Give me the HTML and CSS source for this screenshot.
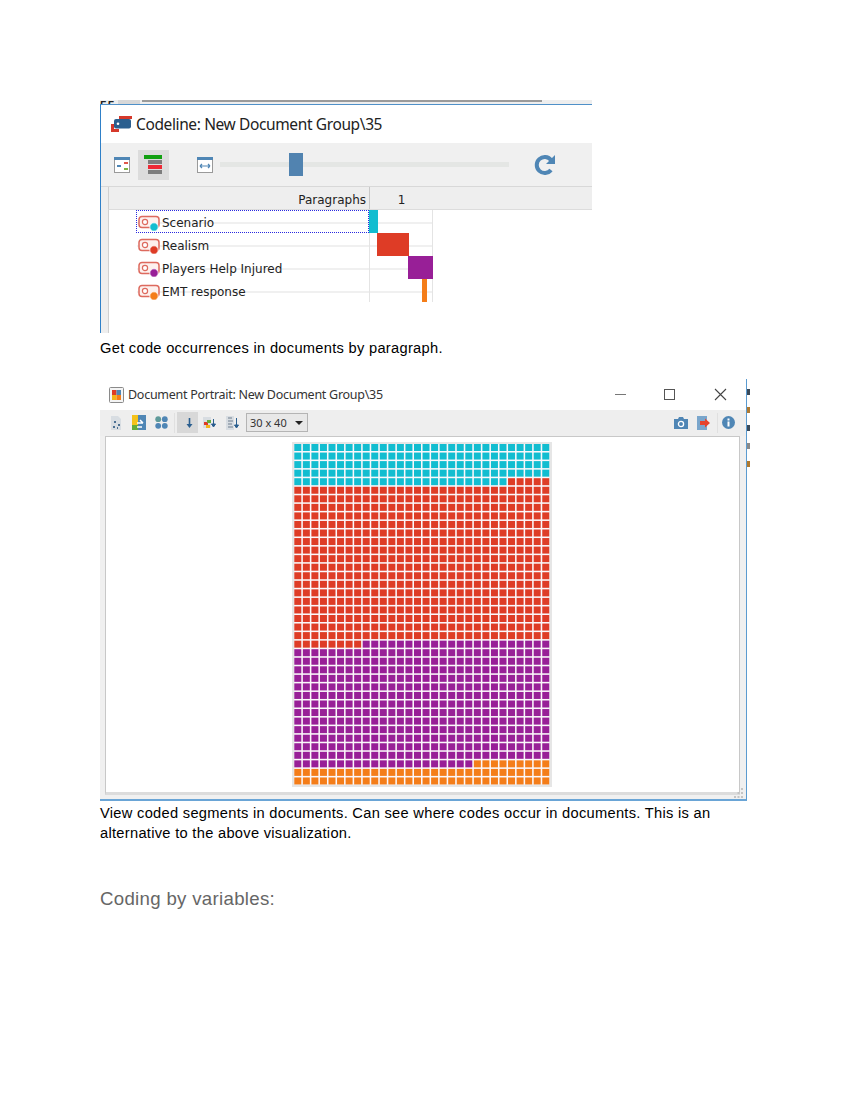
FILE: index.html
```html
<!DOCTYPE html>
<html>
<head>
    <title>Coding visualizations</title>
    <link rel="stylesheet" href="styles.css">
</head>
<body>
    <div class="codeline">
        <div class="behind"><span class="behind-num">55</span><span class="behind-block"></span><span class="behind-bar"></span></div>
        <div class="codeline-window">
            <div class="cl-title">
                <svg class="cl-logo" width="23" height="19" viewBox="0 0 23 19">
                    <path d="M9 1h13v3H9z M1 9h3v5h5v3H1z" fill="#d6392b"/>
                    <rect x="4" y="4" width="17" height="9.500" rx="2" fill="#2b5f8f"/>
                    <circle cx="8" cy="8.800" r="1.300" fill="#fff"/>
                </svg>
                <span>Codeline: New Document Group\35</span>
            </div>
            <div class="cl-toolbar">
                <svg class="cl-icon-a" width="16" height="16" viewBox="0 0 16 16">
                    <rect x="0.5" y="0.5" width="15" height="15" fill="#fff" stroke="#9a9a9a"/>
                    <rect x="0" y="0" width="16" height="3" fill="#4f86b5"/>
                    <rect x="3" y="8" width="4" height="2" fill="#4f86b5"/>
                    <rect x="10" y="5" width="4" height="2" fill="#e0584a"/>
                    <rect x="10" y="11" width="4" height="2" fill="#7cb342"/>
                </svg>
                <div class="cl-selected">
                    <span class="stack stack-green"></span>
                    <span class="stack stack-gray"></span>
                    <span class="stack stack-red"></span>
                    <span class="stack stack-gray"></span>
                </div>
                <svg class="cl-icon-b" width="16" height="16" viewBox="0 0 16 16">
                    <rect x="0.5" y="0.5" width="15" height="15" fill="#fff" stroke="#9a9a9a"/>
                    <rect x="0" y="0" width="16" height="3" fill="#4f86b5"/>
                    <path d="M3 9h10M3 9l2-2M3 9l2 2M13 9l-2-2M13 9l-2 2" fill="none" stroke="#4f86b5" stroke-width="1.2"/>
                </svg>
                <div class="slider"><span class="slider-thumb"></span></div>
                <svg class="refresh" width="24" height="22" viewBox="0 0 24 22">
                    <path d="M18 16a8 8 0 1 1 0-10" fill="none" stroke="#4f86b5" stroke-width="4"/>
                    <path d="M22 1v9h-9z" fill="#4f86b5"/>
                </svg>
            </div>
            <div class="cl-head">
                <div class="cl-head-name">Paragraphs</div>
                <div class="cl-head-col">1</div>
            </div>
            <div class="cl-rows">
                <div class="cl-row">
                    <div class="cl-name cl-name-sel">
                        <svg class="code-icon" width="24" height="18" viewBox="0 0 24 18"><use href="#codeTag"/><circle cx="16" cy="14" r="4.200" fill="#12bdd0" stroke="#fff" stroke-width="0.8"/></svg>
                        <span class="cl-label">Scenario</span>
                    </div>
                    <div class="cl-track"><span class="bar bar-scenario"></span></div>
                </div>
                <div class="cl-row">
                    <div class="cl-name">
                        <svg class="code-icon" width="24" height="18" viewBox="0 0 24 18"><use href="#codeTag"/><circle cx="16" cy="14" r="4.200" fill="#de3c26" stroke="#fff" stroke-width="0.8"/></svg>
                        <span class="cl-label">Realism</span>
                    </div>
                    <div class="cl-track"><span class="bar bar-realism"></span></div>
                </div>
                <div class="cl-row">
                    <div class="cl-name">
                        <svg class="code-icon" width="24" height="18" viewBox="0 0 24 18"><use href="#codeTag"/><circle cx="16" cy="14" r="4.200" fill="#981f97" stroke="#fff" stroke-width="0.8"/></svg>
                        <span class="cl-label">Players Help Injured</span>
                    </div>
                    <div class="cl-track"><span class="bar bar-players"></span></div>
                </div>
                <div class="cl-row">
                    <div class="cl-name">
                        <svg class="code-icon" width="24" height="18" viewBox="0 0 24 18"><use href="#codeTag"/><circle cx="16" cy="14" r="4.200" fill="#f47d19" stroke="#fff" stroke-width="0.8"/></svg>
                        <span class="cl-label">EMT response</span>
                    </div>
                    <div class="cl-track"><span class="bar bar-emt"></span></div>
                </div>
            </div>
        </div>
    </div>
    <p class="caption caption-first">Get code occurrences in documents by paragraph.</p>

    <div class="portrait">
        <div class="pt-main">
            <div class="pt-title">
                <svg class="pt-logo" width="15" height="16" viewBox="0 0 15 16">
                    <rect x="0.5" y="0.5" width="14" height="15" rx="1" fill="#f4f4f4" stroke="#8a8a8a"/>
                    <rect x="3" y="3" width="4.500" height="5" fill="#de3c26"/>
                    <rect x="7.500" y="3" width="4.500" height="5" fill="#4f86b5"/>
                    <rect x="3" y="8" width="4.500" height="5" fill="#f4b41a"/>
                    <rect x="7.500" y="8" width="4.500" height="5" fill="#f47d19"/>
                </svg>
                <span class="pt-text">Document Portrait: New Document Group\35</span>
                <div class="win-buttons">
                    <span class="win-min"></span>
                    <span class="win-max"></span>
                    <svg width="13" height="13" viewBox="0 0 13 13"><path d="M1 1l11 11M12 1L1 12" stroke="#444" stroke-width="1.100"/></svg>
                </div>
            </div>
            <div class="pt-toolbar">
                <svg class="tool-cells" width="14" height="16" viewBox="0 0 14 16">
                    <path d="M2 1h7l3 3v11H2z" fill="#d8dde2"/>
                    <path d="M5 6h2v2H5zM9 9h2v2H9zM4 11h2v2H4zM8 12h1v2H8z" fill="#4a6f92"/>
                </svg>
                <svg class="tool-swap" width="14" height="15" viewBox="0 0 14 15">
                    <rect width="14" height="15" fill="#f4c21a"/>
                    <rect x="6" y="0" width="8" height="15" fill="#4f86b5"/>
                    <rect x="0" y="10" width="6" height="5" fill="#64ac3a"/>
                    <path d="M5 8h6M8 5l3 3M5 12h5" stroke="#fff" stroke-width="1.500" fill="none"/>
                </svg>
                <svg class="tool-dots" width="13" height="13" viewBox="0 0 13 13">
                    <circle cx="3.200" cy="3.200" r="2.900" fill="#5f9a9a"/>
                    <circle cx="9.800" cy="3.200" r="2.900" fill="#4f86b5"/>
                    <circle cx="3.200" cy="9.800" r="2.900" fill="#4f86b5"/>
                    <circle cx="9.800" cy="9.800" r="2.900" fill="#4f86b5"/>
                </svg>
                <span class="tool-sep tool-sep-left"></span>
                <div class="tool-on">
                    <svg width="7" height="10" viewBox="0 0 7 10"><path d="M3.500 0v7" stroke="#2b5f8f" stroke-width="1.600"/><path d="M0.500 6h6L3.500 10z" fill="#2b5f8f"/></svg>
                </div>
                <svg class="tool-sort" width="13" height="13" viewBox="0 0 13 13">
                    <rect x="0" y="1" width="8" height="11" fill="#d8dde2"/>
                    <rect x="1" y="6" width="4" height="3" fill="#de3c26"/>
                    <rect x="4" y="4" width="4" height="3" fill="#64ac3a"/>
                    <rect x="3" y="9" width="4" height="3" fill="#f4b41a"/>
                    <path d="M10.500 3v6M8.500 8h4l-2 3z" fill="#2b5f8f" stroke="#2b5f8f"/>
                </svg>
                <svg class="tool-num" width="13" height="14" viewBox="0 0 13 14">
                    <rect x="0" y="0" width="8" height="14" fill="#d8dde2"/>
                    <path d="M2 2h4M2 5h5M2 8h4M2 11h5" stroke="#6f7f8d" stroke-width="1.200"/>
                    <path d="M10.500 2v8M8.500 9h4l-2 3z" fill="#2b5f8f" stroke="#2b5f8f"/>
                </svg>
                <div class="size-select"><span>30 x 40</span><span class="size-arrow"></span></div>
                <div class="pt-tools-right">
                    <svg class="tool-camera" width="14" height="12" viewBox="0 0 14 12">
                        <path d="M0 2h4l1-2h4l1 2h4v10H0z" fill="#4f86b5"/>
                        <circle cx="7" cy="7" r="2.600" fill="none" stroke="#fff" stroke-width="1.300"/>
                    </svg>
                    <svg class="tool-export" width="13" height="14" viewBox="0 0 13 14">
                        <rect width="10" height="14" fill="#7aa6cc"/>
                        <path d="M3 5h5V2.500L13 7l-5 4.500V9H3z" fill="#e5432d"/>
                    </svg>
                    <span class="tool-sep tool-sep-right"></span>
                    <svg width="13" height="13" viewBox="0 0 13 13">
                        <circle cx="6.500" cy="6.500" r="6.500" fill="#4f86b5"/>
                        <rect x="5.500" y="5.500" width="2" height="5" fill="#fff"/>
                        <rect x="5.500" y="2.500" width="2" height="2" fill="#fff"/>
                    </svg>
                </div>
            </div>
            <div class="pt-canvas">
                <svg id="sheet" class="pt-sheet" width="260" height="345" viewBox="0 0 260 345"></svg>
            </div>
            <svg class="pt-grip" width="9" height="10" viewBox="0 0 9 10">
                <path d="M7 0h2v2H7zM7 4h2v2H7zM7 8h2v2H7zM3.500 4h2v2h-2zM3.500 8h2v2h-2zM0 8h2v2H0z" fill="#c4c4c4"/>
            </svg>
        </div>
        <div class="pt-edge">
            <span class="edge-mark edge-dark"></span>
            <span class="edge-mark edge-brown"></span>
            <span class="edge-mark edge-dark"></span>
            <span class="edge-mark edge-gray"></span>
            <span class="edge-mark edge-brown"></span>
        </div>
    </div>
    <p class="caption caption-second">View coded segments in documents. Can see where codes occur in documents. This is an<br>alternative to the above visualization.</p>

    <h3 class="section-title">Coding by variables:</h3>

    <svg class="defs" width="0" height="0">
        <symbol id="codeTag" viewBox="0 0 24 18">
            <rect x="1" y="3.500" width="20" height="11" rx="3" fill="#fdf1ee" stroke="#dd6a5e" stroke-width="1.500"/>
            <circle cx="7" cy="9" r="2.600" fill="#fff" stroke="#dd6a5e" stroke-width="1.200"/>
        </symbol>
    </svg>

    <script src="script.js"></script>
</body>
</html>
```

FILE: styles.css
```css
body {
    margin: 0;
    padding: 100px 0 0 100px;
    font-family: 'Liberation Sans', Arial, sans-serif;
    color: #000;
    background-color: #fff;
}

.defs {
    position: absolute;
}

/* first screenshot */
.codeline {
    width: 492px;
    height: 233px;
    overflow: hidden;
}

.behind {
    display: flex;
    height: 4px;
    overflow: hidden;
    background-color: #eee;
}

.behind-num {
    width: 18px;
    font-size: 12px;
    font-weight: bold;
    line-height: 12px;
    color: #222;
    letter-spacing: 1px;
}

.behind-block {
    width: 22px;
    background-color: #d8d8d8;
}

.behind-bar {
    margin-left: 2px;
    width: 400px;
    height: 2px;
    background-color: #9a9a9a;
}

.codeline-window {
    height: 229px;
    border-top: 1px solid #4f90c8;
    border-left: 1px solid #2f80c8;
    box-sizing: border-box;
    background-color: #eee;
}

.cl-title {
    display: flex;
    align-items: center;
    height: 38px;
    padding-left: 9px;
    gap: 3px;
    background-color: #fff;
    font-family: 'Noto Sans', sans-serif;
    font-size: 15.5px;
    letter-spacing: -0.38px;
    color: #222;
}

.cl-toolbar {
    display: flex;
    align-items: center;
    height: 43px;
    padding-left: 13px;
    background-color: #f0f0f0;
    border-bottom: 1px solid #d8d8d8;
}

.cl-selected {
    display: flex;
    flex-direction: column;
    align-items: flex-end;
    gap: 1.3px;
    box-sizing: border-box;
    width: 31px;
    height: 30px;
    margin-left: 8px;
    padding: 5px 7px 0 0;
    background-color: #dcdcdc;
}

.stack {
    display: block;
    width: 14px;
    height: 4px;
}

.stack-green {
    width: 18px;
    background-color: #12a012;
}

.stack-gray {
    background-color: #7d7d7d;
}

.stack-red {
    background-color: #ee2a35;
}

.cl-icon-b {
    margin-left: 28px;
}

.slider {
    position: relative;
    width: 289px;
    height: 5px;
    margin-left: 7px;
    background-color: #e4e6e4;
}

.slider-thumb {
    position: absolute;
    left: 69px;
    top: -9px;
    width: 14px;
    height: 23px;
    background-color: #5183b0;
}

.refresh {
    margin-left: 24px;
}

.cl-head {
    display: flex;
    height: 22px;
    margin-left: 7px;
    border-left: 1px solid #d0d0d0;
    border-bottom: 1px solid #dcdcdc;
    background-color: #eee;
    font-family: 'DejaVu Sans', sans-serif;
    font-size: 12px;
    line-height: 26px;
    color: #222;
}

.cl-head-name {
    width: 261px;
    box-sizing: border-box;
    padding-right: 3px;
    text-align: right;
    border-right: 1px solid #c8c8c8;
}

.cl-head-col {
    width: 63px;
    text-align: center;
}

.cl-rows {
    height: 123px;
    margin-left: 7px;
    border-left: 1px solid #d0d0d0;
    background-color: #fff;
}

.cl-row {
    display: flex;
    height: 23px;
    background: linear-gradient(#f0f0f0, #f0f0f0) no-repeat 28px 12px / 296px 2px;
}

.cl-name {
    display: flex;
    align-items: center;
    box-sizing: border-box;
    width: 261px;
    padding-left: 29px;
    border-right: 1px solid #e4e4e4;
    font-family: 'DejaVu Sans', sans-serif;
    font-size: 12px;
    color: #222;
}

.cl-label {
    margin-top: 2px;
}

.cl-name-sel {
    position: relative;
}

.cl-name-sel::before {
    content: "";
    position: absolute;
    left: 27px;
    right: 0;
    top: 0;
    bottom: 0;
    border: 1px dotted #2a2ae0;
}

.cl-track {
    width: 64px;
    margin-left: -1px;
    border-right: 1px solid #e4e4e4;
    box-sizing: border-box;
}

.bar {
    position: relative;
    display: block;
    height: 23px;
}

.bar-scenario {
    width: 9px;
    background-color: #12bdd0;
}

.bar-realism {
    width: 32px;
    margin-left: 8px;
    background-color: #de3c26;
}

.bar-players {
    width: 25px;
    margin-left: 39px;
    background-color: #981f97;
}

.bar-emt {
    width: 5px;
    margin-left: 53px;
    background-color: #f47d19;
}

/* captions */
.caption {
    margin: 0;
    font-size: 14.67px;
    line-height: 20px;
    letter-spacing: 0.29px;
}

.caption-first {
    margin-top: 5px;
}

.caption-second {
    margin-top: 2px;
    width: 640px;
}

.section-title {
    margin: 46px 0 0;
    font-size: 18.67px;
    font-weight: normal;
    line-height: 20px;
    letter-spacing: 0.3px;
    color: #666;
}

/* second screenshot */
.portrait {
    display: flex;
    width: 650px;
    height: 422px;
    margin-top: 21px;
}

.pt-main {
    position: relative;
    width: 647px;
    box-sizing: border-box;
    border-right: 1px solid #5b9bd0;
    border-bottom: 2px solid #6aa5d6;
    background-color: #f0f0f0;
}

.pt-edge {
    display: flex;
    flex-direction: column;
    width: 3px;
    padding-top: 10px;
    gap: 12px;
}

.edge-mark {
    display: block;
    height: 6px;
}

.edge-dark {
    background-color: #3a4a5a;
}

.edge-brown {
    background-color: #b07a30;
}

.edge-gray {
    background-color: #8a8a8a;
}

.pt-title {
    display: flex;
    align-items: center;
    height: 31px;
    padding-left: 9px;
    background-color: #fff;
    font-family: 'Noto Sans', sans-serif;
    font-size: 12.5px;
    letter-spacing: -0.27px;
    color: #333;
}

.pt-text {
    margin-left: 4px;
}

.win-buttons {
    display: flex;
    align-items: center;
    margin-left: auto;
    margin-right: 19px;
    gap: 39px;
}

.win-min {
    width: 11px;
    height: 1px;
    margin-right: -1px;
    background-color: #777;
}

.win-max {
    width: 9px;
    height: 9px;
    border: 1px solid #555;
}

.pt-toolbar {
    display: flex;
    align-items: center;
    height: 25px;
    padding: 0 0 1px 9px;
    gap: 7px;
    background-color: #eee;
}

.tool-swap,
.tool-dots {
    margin-left: 2px;
}

.tool-sep {
    width: 1px;
    height: 20px;
    background-color: #e0e0e0;
}

.tool-sep-left {
    margin-left: -1px;
}

.tool-sep-right {
    margin-right: 4px;
}

.tool-on {
    display: flex;
    align-items: center;
    justify-content: flex-end;
    box-sizing: border-box;
    width: 21px;
    height: 21px;
    margin-left: -5px;
    padding-right: 5px;
    background-color: #d8d8d8;
}

.tool-sort {
    margin-left: -2px;
}

.tool-num {
    margin-left: 3px;
}

.size-select {
    display: flex;
    align-items: center;
    justify-content: space-between;
    box-sizing: border-box;
    width: 62px;
    height: 19px;
    padding: 0 4px 0 3px;
    border: 1px solid #b4b4b4;
    background-color: #e8e8e8;
    font-family: 'Noto Sans', sans-serif;
    font-size: 11px;
    color: #333;
}

.size-arrow {
    width: 0;
    height: 0;
    border-left: 4px solid transparent;
    border-right: 4px solid transparent;
    border-top: 4px solid #222;
}

.pt-tools-right {
    display: flex;
    align-items: center;
    margin-left: auto;
    margin-right: 11px;
}

.tool-camera {
    margin-right: 9px;
}

.tool-export {
    margin-right: 7px;
}

.pt-canvas {
    box-sizing: border-box;
    width: 635px;
    height: 359px;
    margin-left: 5px;
    padding: 5px 0 0 186px;
    border-top: 1px solid #c8c8c8;
    border-left: 1px solid #c8c8c8;
    border-right: 1px solid #c8c8c8;
    border-bottom: 3px solid #dcdcdc;
    background-color: #fff;
}

.pt-sheet {
    display: block;
}

.pt-grip {
    position: absolute;
    right: 3px;
    bottom: 1px;
}

.sheet-back {
    fill: #e6e6e6;
}

.sheet-inner {
    fill: #fbf7fa;
}

.cell-teal {
    fill: #12bdd0;
}

.cell-red {
    fill: #de3c26;
}

.cell-purple {
    fill: #981f97;
}

.cell-orange {
    fill: #f47d19;
}
```

FILE: script.js
```js
// cells per code, filled row by row (30 x 40 = 1200)
const segments = [
    { name: "teal", count: 145 },
    { name: "red", count: 553 },
    { name: "purple", count: 433 },
    { name: "orange", count: 69 }
];

const svgNs = "http://www.w3.org/2000/svg";
const sheet = document.getElementById("sheet");
const startX = 2.3;
const startY = 2;
const pitch = 8.55;
const cellSize = 7;

function addRect(x, y, w, h, className) {
    const rect = document.createElementNS(svgNs, "rect");
    rect.setAttribute("x", x);
    rect.setAttribute("y", y);
    rect.setAttribute("width", w);
    rect.setAttribute("height", h);
    rect.setAttribute("class", className);
    sheet.appendChild(rect);
}

addRect(0, 0, 260, 345, "sheet-back");
addRect(startX, startY, pitch * 30 - 1.5, pitch * 40 - 1.5, "sheet-inner");

let index = 0;
for (const segment of segments) {
    for (let i = 0; i < segment.count; i++) {
        const col = index % 30;
        const row = Math.floor(index / 30);
        addRect(startX + col * pitch, startY + row * pitch, cellSize, cellSize, "cell-" + segment.name);
        index++;
    }
}
```
